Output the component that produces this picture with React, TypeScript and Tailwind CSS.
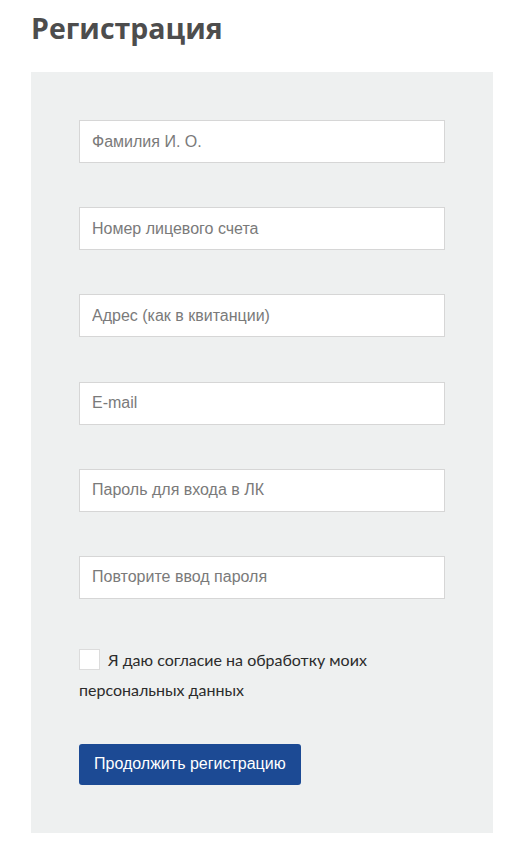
import React from "react";

const fields = [
  "Фамилия И. О.",
  "Номер лицевого счета",
  "Адрес (как в квитанции)",
  "E-mail",
  "Пароль для входа в ЛК",
  "Повторите ввод пароля",
];

export default function App() {
  return (
    <div className="w-[522px] min-h-[845px] bg-white">
      <h1
        className="pl-[31px] pt-[11px] text-[28.5px] font-bold leading-[34px] text-[#4d4d4d]"
        style={{ fontFamily: '"Open Sans", "Liberation Sans", sans-serif' }}
      >
        Регистрация
      </h1>
      <div className="ml-[31px] mt-[27px] w-[462px] bg-[#eef0f0] px-[48px] pt-[48px] pb-[48px]">
        <div className="flex flex-col gap-[44.2px]">
          {fields.map((f) => (
            <input
              key={f}
              type="text"
              placeholder={f}
              className="h-[43px] w-[366px] border border-[#d6d6d6] bg-white px-[12px] text-[16px] text-[#333] outline-none placeholder:text-[#7a7a7a]"
              style={{ fontFamily: '"Liberation Sans", Arial, sans-serif' }}
            />
          ))}
        </div>
        <div
          className="mt-[46px] text-[16px] leading-[30px] text-[#2b2b2b]"
          style={{ fontFamily: 'Lato, "Open Sans", sans-serif' }}
        >
          <div className="flex h-[30px] items-center">
            <span className="mr-[8px] h-[21px] w-[21px] border border-[#dcdcdc] bg-white" />
            <span>Я даю согласие на обработку моих</span>
          </div>
          <div className="h-[30px]">персональных данных</div>
        </div>
        <button
          className="mt-[39px] h-[41px] rounded-[3px] bg-[#1c4a94] px-[15px] text-[16px] text-white"
          style={{ fontFamily: '"Liberation Sans", Arial, sans-serif' }}
        >
          Продолжить регистрацию
        </button>
      </div>
    </div>
  );
}
